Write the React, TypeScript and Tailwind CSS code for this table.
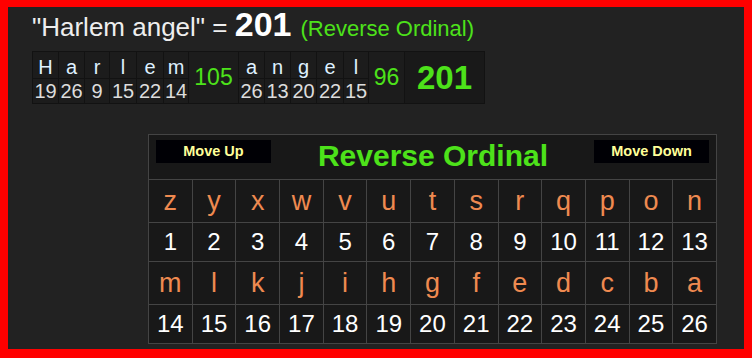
import React from "react";

const w1 = [
  ["H", "19"],
  ["a", "26"],
  ["r", "9"],
  ["l", "15"],
  ["e", "22"],
  ["m", "14"],
];
const w2 = [
  ["a", "26"],
  ["n", "13"],
  ["g", "20"],
  ["e", "22"],
  ["l", "15"],
];
const w1w = [26, 26, 25, 27, 27, 25];
const w2w = [26, 26, 26, 27, 25];

const row1 = "zyxwvutsrqpon".split("");
const row2 = "mlkjihgfedcba".split("");

export default function App() {
  const font = { fontFamily: '"Liberation Sans", Arial, sans-serif' };
  return (
    <div className="w-[752px] h-[358px] bg-[#ff0000] p-[8px]" style={font}>
      <div className="w-[736px] h-[342px] bg-[#222222] pl-[24px] pt-0">
        <div className="leading-none whitespace-nowrap -mt-[1px] h-[34px]">
          <span className="text-[26px] text-[#eeeeee]">"Harlem angel" =&nbsp;</span>
          <span className="text-[34px] font-bold text-white">201</span>
          <span className="text-[22px] text-[#4de21a] ml-[9px]">(Reverse Ordinal)</span>
        </div>
        <table className="border-collapse mt-[10px] bg-[#1c1c1c]">
          <tbody>
            <tr className="h-[27px]">
              {w1.map(([l], i) => (
                <td key={i} style={{ width: w1w[i] }} className="border border-[#121212] p-0 text-center text-[20px] leading-[21px] text-[#def0ff] align-bottom">
                  {l}
                </td>
              ))}
              <td rowSpan={2} className="w-[50px] border border-[#121212] p-0 text-center text-[23px] text-[#4de21a]">105</td>
              {w2.map(([l], i) => (
                <td key={i} style={{ width: w2w[i] }} className="border border-[#121212] p-0 text-center text-[20px] leading-[21px] text-[#def0ff] align-bottom">
                  {l}
                </td>
              ))}
              <td rowSpan={2} className="w-[36px] border border-[#121212] p-0 text-center text-[23px] text-[#4de21a]">96</td>
              <td rowSpan={2} className="w-[80px] border border-[#121212] p-0 text-center text-[33px] font-bold text-[#4de21a] bg-[#191919]">201</td>
            </tr>
            <tr className="h-[25px]">
              {w1.map(([, n], i) => (
                <td key={i} className="border border-[#121212] p-0 text-center text-[20px] leading-[22px] text-[#dddddd] whitespace-nowrap">
                  {n}
                </td>
              ))}
              {w2.map(([, n], i) => (
                <td key={i} className="border border-[#121212] p-0 text-center text-[20px] leading-[22px] text-[#dddddd] whitespace-nowrap">
                  {n}
                </td>
              ))}
            </tr>
          </tbody>
        </table>
        <table className="border-collapse table-fixed ml-[116px] mt-[30px] w-[569px] bg-[#181818]">
          <tbody>
            <tr className="h-[45px]">
              <td colSpan={13} className="border border-[#444444] p-0 align-top">
                <div className="flex items-start justify-between px-[7px] pt-[5px]">
                  <div className="w-[115px] h-[23px] bg-[#000005] flex items-center justify-center text-[14.5px] font-bold text-[#ffff99]">
                    Move Up
                  </div>
                  <div className="text-[30px] font-bold text-[#4de21a] leading-none mt-[1px] ml-[1px]">Reverse Ordinal</div>
                  <div className="w-[115px] h-[23px] bg-[#000005] flex items-center justify-center text-[14.5px] font-bold text-[#ffff99]">
                    Move Down
                  </div>
                </div>
              </td>
            </tr>
            <tr className="h-[43px]">
              {row1.map((c, i) => (
                <td key={i} className="border border-[#444444] p-0 text-center text-[27px] leading-none text-[#ef8a50]">{c}</td>
              ))}
            </tr>
            <tr className="h-[39px]">
              {row1.map((_, i) => (
                <td key={i} className="border border-[#444444] p-0 text-center text-[24px] leading-none text-white">{i + 1}</td>
              ))}
            </tr>
            <tr className="h-[43px]">
              {row2.map((c, i) => (
                <td key={i} className="border border-[#444444] p-0 text-center text-[27px] leading-none text-[#ef8a50]">{c}</td>
              ))}
            </tr>
            <tr className="h-[39px]">
              {row2.map((_, i) => (
                <td key={i} className="border border-[#444444] p-0 text-center text-[24px] leading-none text-white">{i + 14}</td>
              ))}
            </tr>
          </tbody>
        </table>
      </div>
    </div>
  );
}
